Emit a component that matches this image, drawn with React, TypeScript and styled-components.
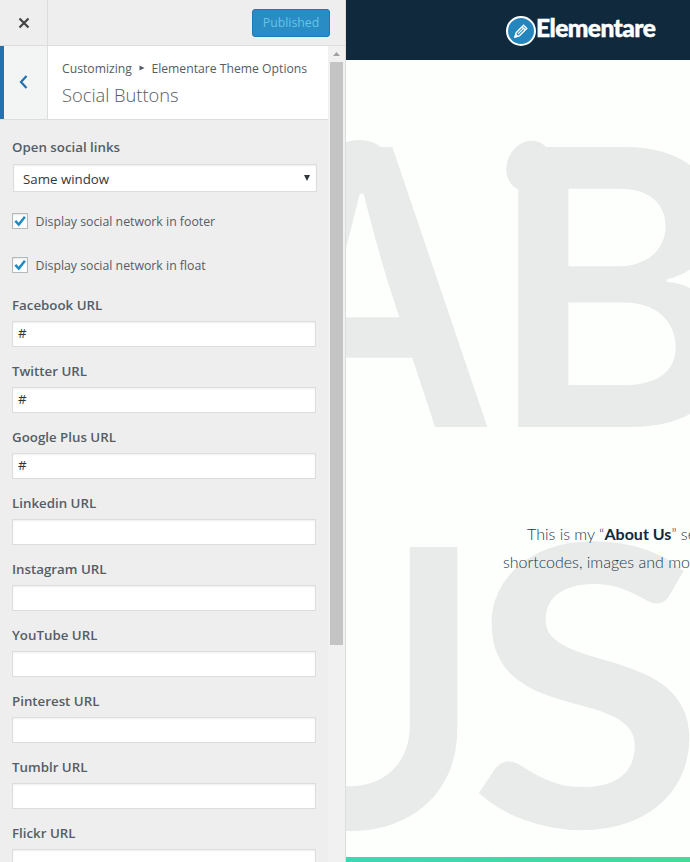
import React from 'react';
import styled, { createGlobalStyle } from 'styled-components';

const Global = createGlobalStyle`
  *, *::before, *::after { box-sizing: border-box; }
  body { margin: 0; overflow: hidden; background: #eee; }
`;

const Shell = styled.div`
  display: flex;
  width: 690px;
  height: 862px;
  overflow: hidden;
  font-family: "Open Sans", "Noto Sans", sans-serif;
  color: #555d66;
`;

const Sidebar = styled.aside`
  display: flex;
  flex-direction: column;
  flex: none;
  width: 346px;
  height: 862px;
  background: #eee;
  border-right: 1px solid #ddd;
  overflow: hidden;
`;

const Toolbar = styled.header`
  display: flex;
  flex: none;
  justify-content: space-between;
  height: 46px;
  border-bottom: 1px solid #ddd;
`;

const CloseButton = styled.button`
  display: grid;
  place-items: center;
  width: 48px;
  padding: 0;
  border: 0;
  border-right: 1px solid #ddd;
  background: #eee;
`;

const PublishButton = styled.button`
  width: 78px;
  height: 28px;
  margin: 9px 15px 0 0;
  padding: 0 0 1px;
  border: 1px solid #1b7aae;
  border-radius: 3px;
  background: #298cc4;
  color: #66c6e4;
  font: 400 12.3px/24px "Open Sans", sans-serif;
`;

const Scroller = styled.div`
  display: flex;
  flex: 1;
  min-height: 0;
`;

const Panel = styled.div`
  flex: none;
  width: 328px;
  overflow: hidden;
`;

const PanelHead = styled.div`
  display: flex;
  height: 74px;
  border-bottom: 1px solid #ddd;
  background: #fff;
`;

const BackButton = styled.button`
  display: grid;
  place-items: center;
  width: 48px;
  padding: 0 4px 2px 0;
  border: 0;
  border-left: 4px solid #2271b1;
  border-right: 1px solid #ddd;
  background: #f3f5f5;
`;

const Heading = styled.div`
  padding: 12px 0 0 14px;
  white-space: nowrap;
`;

const Crumbs = styled.div`
  display: flex;
  align-items: center;
  height: 20px;
  font-size: 12.2px;
`;

const CrumbArrow = styled.svg`
  margin: 0 6px 0 7.500px;
`;

const Title = styled.h1`
  margin: 4px 0 0;
  font-size: 18.3px;
  font-weight: 300;
  line-height: 26px;
`;

const Controls = styled.div`
  padding: 17px 12px 0;
`;

const Label = styled.label`
  display: block;
  height: 20px;
  font-size: 13.3px;
  font-weight: 600;
  line-height: 20px;
`;

const Select = styled.div`
  display: flex;
  align-items: center;
  justify-content: space-between;
  width: 304px;
  height: 28px;
  margin: 7px 0 0 1px;
  padding: 1px 6px 0 9px;
  border: 1px solid #ddd;
  background: #fff;
  box-shadow: inset 0 1px 2px rgba(0, 0, 0, 0.07);
  color: #32373c;
  font-size: 13.3px;
`;

const CheckRow = styled.div`
  display: flex;
  align-items: center;
  height: 20px;
  margin-top: 24px;
  gap: 7.5px;
  font-size: 12.3px;

  ${Select} + & { margin-top: 19px; }
`;

const Box = styled.span`
  display: grid;
  place-items: center;
  width: 16px;
  height: 16px;
  border: 1px solid #b4b9be;
  background: #fff;
  box-shadow: inset 0 1px 2px rgba(0, 0, 0, 0.1);
`;

const Fields = styled.div`
  margin-top: 20px;
`;

const Field = styled.div`
  height: 66px;
`;

const Input = styled.input`
  display: block;
  width: 304px;
  height: 26px;
  margin-top: 6px;
  padding: 0 5px 2px;
  border: 1px solid #ddd;
  border-radius: 0;
  background: #fff;
  box-shadow: inset 0 1px 2px rgba(0, 0, 0, 0.07);
  color: #32373c;
  font: 400 13.3px "Open Sans", sans-serif;
`;

const Scrollbar = styled.div`
  display: flex;
  flex-direction: column;
  align-items: center;
  width: 17px;
  background: #f1f1f1;
`;

const ScrollArrow = styled.svg`
  flex: none;
`;

const Thumb = styled.div`
  flex: none;
  width: 13px;
  height: 583px;
  background: #c4c4c4;
`;

const Preview = styled.main`
  position: relative;
  display: flex;
  flex-direction: column;
  flex: 1;
  min-width: 0;
  overflow: hidden;
  background: #fdfffd;
`;

const SiteBar = styled.div`
  display: flex;
  flex: none;
  height: 60px;
  padding: 16px 0 0 160px;
  background: #10293d;
`;

const EditBadge = styled.span`
  display: grid;
  flex: none;
  place-items: center;
  width: 30px;
  height: 30px;
  border: 2px solid #fff;
  border-radius: 50%;
  background: #2585bd;
`;

const Brand = styled.span`
  margin-top: -2px;
  color: #fff;
  font: 900 24.5px/28px Lato, sans-serif;
  letter-spacing: -0.55px;
  -webkit-text-stroke: 0.5px #fff;
`;

const Backdrop = styled.div`
  position: absolute;
  inset: 60px 0 5px;
  overflow: hidden;
  color: #e8ebea;
`;

const Letter = styled.span<{ $x: number; $y: number; $stretch?: number; $slanted?: boolean }>`
  position: absolute;
  left: ${(p) => p.$x}px;
  top: ${(p) => p.$y}px;
  font: ${(p) => (p.$slanted ? '700 391px/391px Lato' : '600 385px/385px Inter')}, sans-serif;
  transform: scaleX(${(p) => p.$stretch ?? 1});
  transform-origin: 0 0;
`;

const Knob = styled.i<{ $x: number; $y: number; $w: number; $h: number; $turn?: number }>`
  position: absolute;
  left: ${(p) => p.$x}px;
  top: ${(p) => p.$y}px;
  width: ${(p) => p.$w}px;
  height: ${(p) => p.$h}px;
  border-radius: 50%;
  background: currentColor;
  transform: rotate(${(p) => p.$turn ?? 0}deg);
`;

const Copy = styled.p`
  position: relative;
  flex: 1;
  margin: 0;
  padding: 460px 0 0 157px;
  color: #24394c;
  font: 300 16px/28px Lato, sans-serif;
  white-space: nowrap;
  text-indent: 24px;

  strong { color: #10293d; font-weight: 700; }
`;

const NextSection = styled.div`
  flex: none;
  height: 5px;
  background: linear-gradient(90deg, #3fd6b4, #48d99b);
`;

const networks = [
  ['Facebook URL', '#'],
  ['Twitter URL', '#'],
  ['Google Plus URL', '#'],
  ['Linkedin URL', ''],
  ['Instagram URL', ''],
  ['YouTube URL', ''],
  ['Pinterest URL', ''],
  ['Tumblr URL', ''],
  ['Flickr URL', ''],
];

function Checkbox({ text }: { text: string }) {
  return (
    <CheckRow>
      <Box>
        <svg width="12" height="12" viewBox="0 0 12 12" fill="none">
          <path d="M1.300 5.800 4.800 9.500 10.900 1.800" stroke="#1e8cbe" strokeWidth="2.5" />
        </svg>
      </Box>
      {text}
    </CheckRow>
  );
}

export default function App() {
  return (
    <Shell>
      <Global />
      <Sidebar>
        <Toolbar>
          <CloseButton aria-label="Close">
            <svg width="12" height="12" viewBox="0 0 12 12">
              <path d="M1.500 1.500 10.500 10.500M10.500 1.500 1.500 10.500" stroke="#444" strokeWidth="2.2" />
            </svg>
          </CloseButton>
          <PublishButton>Published</PublishButton>
        </Toolbar>
        <Scroller>
          <Panel>
            <PanelHead>
              <BackButton aria-label="Back">
                <svg width="9" height="14" viewBox="0 0 9 14" fill="none">
                  <path d="M7.500 1 2 7l5.500 6" stroke="#2271b1" strokeWidth="2.2" />
                </svg>
              </BackButton>
              <Heading>
                <Crumbs>
                  Customizing
                  <CrumbArrow width="6" height="6" viewBox="0 0 6 6">
                    <path d="M0.500 0.500 5.500 3 0.500 5.500z" fill="#555d66" />
                  </CrumbArrow>
                  Elementare Theme Options
                </Crumbs>
                <Title>Social Buttons</Title>
              </Heading>
            </PanelHead>
            <Controls>
              <Label>Open social links</Label>
              <Select>
                Same window
                <svg width="6" height="8" viewBox="0 0 6 8">
                  <path d="M0 0h6L3 6z" fill="#32373c" />
                </svg>
              </Select>
              <Checkbox text="Display social network in footer" />
              <Checkbox text="Display social network in float" />
              <Fields>
                {networks.map(([name, value]) => (
                  <Field key={name}>
                    <Label>{name}</Label>
                    <Input defaultValue={value} aria-label={name} />
                  </Field>
                ))}
              </Fields>
            </Controls>
          </Panel>
          <Scrollbar>
            <ScrollArrow width="17" height="16" viewBox="0 0 17 16">
              <path d="M5 10h7L8.500 6z" fill="#a0a0a0" />
            </ScrollArrow>
            <Thumb />
          </Scrollbar>
        </Scroller>
      </Sidebar>
      <Preview>
        <Backdrop>
          <Letter $x={-116} $y={34.5} $stretch={0.95}>A</Letter>
          <Knob $x={-20} $y={80} $w={66} $h={54} />
          <Letter $x={144} $y={34.5}>B</Letter>
          <Knob $x={161} $y={80} $w={44} $h={52} $turn={25} />
          <Letter $x={-130} $y={434.5} $stretch={0.945}>U</Letter>
          <Letter $x={123} $y={420} $stretch={1.1} $slanted>S</Letter>
        </Backdrop>
        <SiteBar>
          <EditBadge>
            <svg width="16" height="16" viewBox="0 0 16 16" fill="none" stroke="#fff" strokeWidth="1.3">
              <path d="M2 14l1.200-4.300L10.500 2.200l3.300 3.300L6.300 12.800z" />
              <path d="M5 10.900 11 4.900M9 3.700l3.300 3.300" />
              <path d="M2 14l.8-2.600 1.800 1.800z" fill="#fff" />
            </svg>
          </EditBadge>
          <Brand>Elementare</Brand>
        </SiteBar>
        <Copy>
          This is my “<strong>About Us</strong>” se
          <br />
          shortcodes, images and mo
        </Copy>
        <NextSection />
      </Preview>
    </Shell>
  );
}
